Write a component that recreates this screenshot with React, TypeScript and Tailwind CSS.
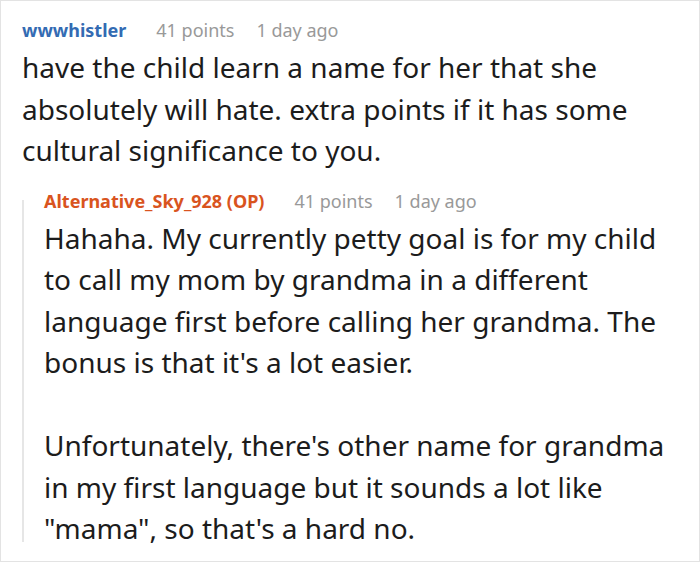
import React from 'react';

const font = { fontFamily: '"Noto Sans", "Open Sans", sans-serif' };

const Meta: React.FC<{ name: string; nameClass: string }> = ({ name, nameClass }) => (
  <div className="flex items-center text-[18px] leading-[24px]">
    <span className={`font-bold ${nameClass}`}>{name}</span>
    <span className="ml-[30px] text-[#999999]">41 points</span>
    <span className="ml-[22px] text-[#999999]">1 day ago</span>
  </div>
);

export default function App() {
  return (
    <div
      style={font}
      className="w-[700px] h-[562px] overflow-hidden bg-white border border-[#e3e3e3] text-[#1c1c1c]"
    >
      {/* ── Top comment ── */}
      <div className="pl-[21px] pt-[17px]">
        <Meta name="wwwhistler" nameClass="text-[#336bb3]" />
        <p className="mt-[5px] text-[28px] leading-[41.5px] pr-4">
          have the child learn a name for her that she absolutely will hate. extra points if it has some
          cultural significance to you.
        </p>
      </div>

      {/* ── Reply ── */}
      <div className="flex ml-[21px] mt-[17px]">
        <div className="w-[2px] shrink-0 bg-[#e6e6e6] mt-[11px] mb-[8px]" />
        <div className="pl-[20px]">
          <Meta name="Alternative_Sky_928 (OP)" nameClass="text-[#d9541e]" />
          <p className="mt-[5px] text-[28px] leading-[41.5px] pr-4">
            Hahaha. My currently petty goal is for my child to call my mom by grandma in a different
            language first before calling her grandma. The bonus is that it's a lot easier.
          </p>
          <p className="mt-[41.5px] text-[28px] leading-[41.5px] pr-4">
            Unfortunately, there's other name for grandma in my first language but it sounds a lot like
            "mama", so that's a hard no.
          </p>
        </div>
      </div>
    </div>
  );
}
